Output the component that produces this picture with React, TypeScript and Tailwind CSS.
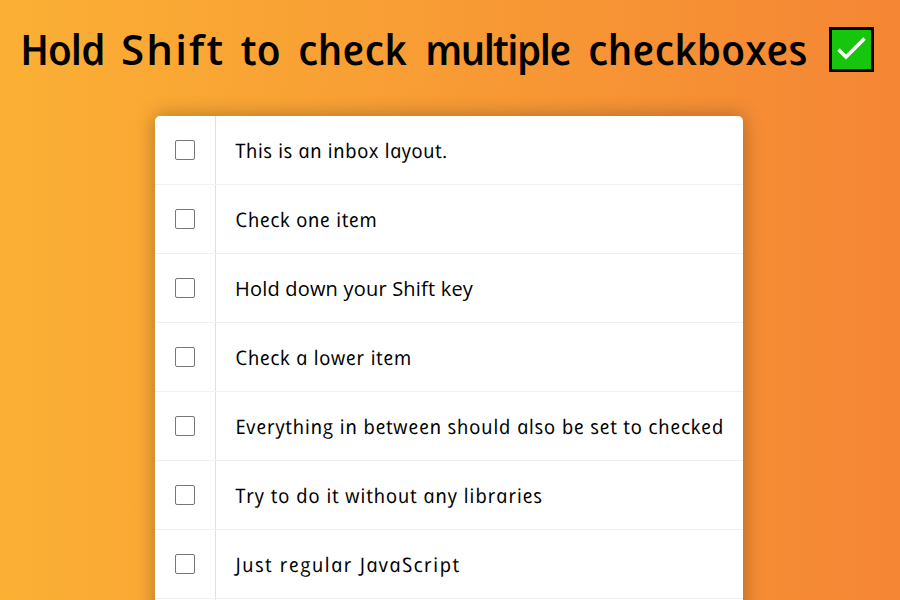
const items = [
  { text: 'This is an inbox layout.', style: 'skew-x-12 italic tracking-[0.45px]' },
  { text: 'Check one item', style: 'skew-x-12 italic tracking-[0.55px]' },
  { text: 'Hold down your Shift key', style: 'tracking-[0.2px]' },
  { text: 'Check a lower item', style: 'skew-x-12 italic tracking-[0.55px]' },
  { text: 'Everything in between should also be set to checked', style: 'skew-x-12 italic tracking-[0.66px]' },
  { text: 'Try to do it without any libraries', style: 'skew-x-12 italic tracking-[0.75px]' },
  { text: 'Just regular JavaScript', style: 'skew-x-12 italic tracking-[1.35px]' },
  { text: '', style: '' },
];

const title = [
  { text: 'Hold', box: 'w-[102px]', style: 'skew-x-12 italic tracking-[-1.2px]' },
  { text: 'Shift', box: 'w-[119px]', style: 'tracking-[2.2px]' },
  { text: 'to', box: 'w-[57px]', style: 'skew-x-12 italic' },
  { text: 'check', box: 'w-[127px]', style: 'skew-x-12 italic' },
  { text: 'multiple', box: 'w-[163px]', style: 'skew-x-12 italic tracking-[-1.8px]' },
  { text: 'checkboxes', box: 'w-[241px]', style: 'skew-x-12 italic' },
];

function CheckBadge() {
  return (
    <svg className="mt-[27px] h-[45px] w-[45px] shrink-0" viewBox="0 0 45 45">
      <rect x="1.5" y="1.5" width="42" height="42" fill="#16c60c" stroke="#000" strokeWidth="3" />
      <path d="M9.5 22.5L17 30L35.5 11.5" fill="none" stroke="#fff" strokeWidth="3.6" />
    </svg>
  );
}

export default function App() {
  return (
    <div className="h-[600px] overflow-hidden bg-[linear-gradient(to_right,#fbb034,#f58634)] font-['Comic_Sans_MS','Open_Sans',sans-serif] text-black">
      <h1 className="flex h-[116px] pl-[20px] text-[42px] leading-[98px] font-semibold">
        {title.map((w) => (
          <span key={w.text} className={`${w.box} shrink-0 whitespace-nowrap`}>
            <span className={`-ml-px inline-block ${w.style}`}>{w.text}</span>
          </span>
        ))}
        <CheckBadge />
      </h1>
      <div className="ml-[155px] w-[588px] rounded-[5px] bg-white shadow-[0_0_20px_rgba(0,0,0,0.3)]">
        {items.map((item) => (
          <label key={item.text} className="flex h-[69px] items-stretch border-b border-[#f1f1f1]">
            <span className="flex w-[61px] shrink-0 items-center border-r border-[#d1e2ff] pl-[20px]">
              <input type="checkbox" className="h-[20px] w-[20px] appearance-none rounded-[2px] border border-[#767676] bg-white" />
            </span>
            <span className="pl-[19px] text-[20px] leading-[69px] whitespace-nowrap">
              <span className={`inline-block ${item.style}`}>{item.text}</span>
            </span>
          </label>
        ))}
      </div>
    </div>
  );
}
